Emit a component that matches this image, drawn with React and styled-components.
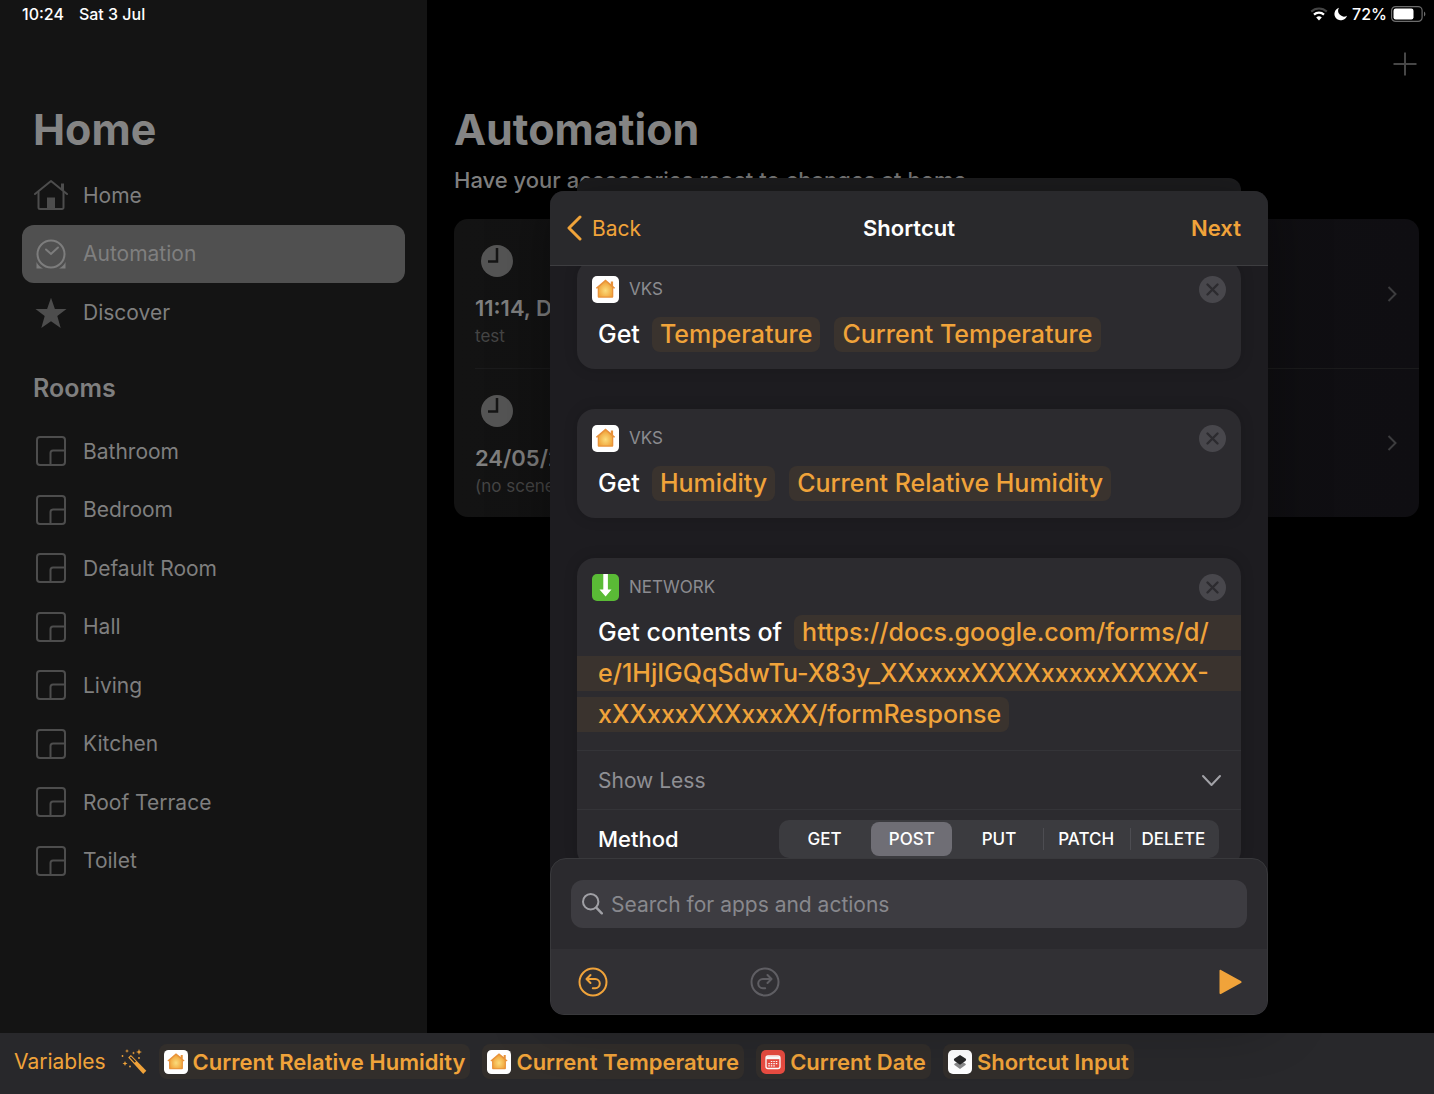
import React, { useState } from 'react';
import styled, { createGlobalStyle } from 'styled-components';

const GlobalStyle = createGlobalStyle`
    * {
        box-sizing: border-box;
    }

    body {
        margin: 0;
        background: #000;
        font-family: Inter, 'Liberation Sans', sans-serif;
    }

    h1, h2, h3, p, ul {
        margin: 0;
        padding: 0;
    }

    button {
        padding: 0;
        border: 0;
        background: none;
        color: inherit;
        font: inherit;
        cursor: pointer;
    }

    svg {
        display: block;
        flex: none;
    }
`;

const Screen = styled.div`
    display: flex;
    flex-direction: column;
    min-height: 100vh;
    overflow: hidden;
`;

const Columns = styled.div`
    display: flex;
    flex: 1;
`;

const StatusBar = styled.div`
    display: flex;
    align-items: center;
    justify-content: ${({ $end }) => ($end ? 'flex-end' : 'flex-start')};
    gap: ${({ $end }) => ($end ? '4px' : '15px')};
    height: 28px;
    padding: ${({ $end }) => ($end ? '0 8px' : '0 22px')};
    color: #fff;
    font-size: 16px;
    font-weight: 500;
`;

/* Sidebar */

const Sidebar = styled.aside`
    flex: 0 0 427px;
    background: #141414;
`;

const SideTitle = styled.h1`
    padding: 73px 33px 9px;
    color: #848484;
    font-size: 43px;
    font-weight: 700;
    line-height: 56px;
`;

const SideHeading = styled.h2`
    padding: 30px 33px 18px;
    color: #7f7f7f;
    font-size: 25px;
    font-weight: 600;
    line-height: 32px;
`;

const NavList = styled.ul`
    display: grid;
    grid-auto-rows: 1fr;
    height: ${({ $height }) => $height}px;
    padding: 0 22px;
    list-style: none;
`;

const NavItem = styled.a`
    display: flex;
    align-items: center;
    gap: 15px;
    height: 100%;
    padding: 0 12px;
    border-radius: 12px;
    background: ${({ $active }) => ($active ? '#505050' : 'transparent')};
    color: #7f7f7f;
    font-size: 21px;
    text-decoration: none;

    svg {
        color: ${({ $active }) => ($active ? '#7d7d7d' : '#4d4d4d')};
    }
`;

/* Automation page */

const Main = styled.main`
    position: relative;
    flex: 1;
    min-width: 0;
`;

const MainTools = styled.div`
    display: flex;
    align-items: flex-start;
    justify-content: flex-end;
    height: 73px;
    padding: 24px 17px 0;
    color: #474747;
`;

const PageTitle = styled.h1`
    padding: 0 27px;
    color: #848484;
    font-size: 43px;
    font-weight: 700;
    line-height: 56px;
`;

const PageText = styled.p`
    padding: 9px 27px 0;
    color: #7f7f7f;
    font-size: 22px;
    font-weight: 500;
    line-height: 28px;
    white-space: nowrap;
`;

const AutomationList = styled.div`
    margin: 25px 15px 0 27px;
    border-radius: 14px;
    background: linear-gradient(90deg, #131313, #0f0e12);
`;

const AutomationRow = styled.article`
    display: flex;
    align-items: center;
    justify-content: space-between;
    height: 149px;
    margin-left: 21px;
    padding-right: 21px;
    color: #3c3c3e;

    & + & {
        border-top: 1px solid #1b1b1c;
    }
`;

const RowInfo = styled.div`
    padding-top: 8px;

    svg {
        margin: 0 0 17px 6px;
        color: #555;
    }
`;

const RowTitle = styled.h2`
    color: #7f7f7f;
    font-size: 22px;
    font-weight: 600;
    line-height: 28px;
`;

const RowText = styled.p`
    color: #454545;
    font-size: 17px;
    line-height: 28px;
`;

/* Shortcut dialog */

const Layer = styled.div`
    position: absolute;
    inset: 0;
    display: flex;
    flex-direction: column;
    padding: 178px 166px 18px 123px;
`;

const BackSheet = styled.div`
    flex: none;
    height: 13px;
    margin: 0 27px;
    border-radius: 12px 12px 0 0;
    background: #1e1e20;
`;

const Dialog = styled.section`
    display: flex;
    flex: 1;
    flex-direction: column;
    min-height: 0;
    border-radius: 14px;
    background: #1d1c20;
    box-shadow: 0 0 60px rgba(0, 0, 0, 0.4);
    overflow: hidden;
`;

const DialogHead = styled.header`
    display: grid;
    flex: none;
    grid-template-columns: 1fr auto 1fr;
    align-items: center;
    height: 75px;
    padding: 0 27px 0 16px;
    border-bottom: 1px solid #3d3d40;
    background: #29292c;
    color: #f0a33a;
    font-size: 22px;
`;

const BackButton = styled.button`
    display: flex;
    align-items: center;
    gap: 9px;
    font-size: 21px;
`;

const DialogTitle = styled.h2`
    padding-left: 11px;
    color: #fff;
    font-size: 22px;
    font-weight: 600;
`;

const NextButton = styled.button`
    justify-self: end;
    font-weight: 600;
`;

const Actions = styled.div`
    display: flex;
    flex: 1;
    flex-direction: column;
    gap: 40px;
    min-height: 0;
    padding: 0 27px;
    overflow: hidden;
`;

const ActionCard = styled.article`
    flex: none;
    border-radius: 18px;
    margin-top: ${({ $scrolled }) => ($scrolled ? '-6px' : '0')};
    background: #2c2b2f;
    box-shadow: 0 0 14px rgba(0, 0, 0, 0.15);
    overflow: hidden;
`;

const CardHead = styled.div`
    display: flex;
    align-items: center;
    gap: 10px;
    padding: 16px 15px 14px;
    color: #8b8b90;
    font-size: 17px;
    line-height: 27px;

    button {
        margin-left: auto;
    }
`;

const Sentence = styled.div`
    display: flex;
    gap: 14px;
    padding: 0 21px 17px;
    color: #fff;
    font-size: 25px;
    font-weight: 500;
    line-height: 35px;
    white-space: nowrap;
`;

const Chip = styled.button`
    padding: 0 8px;
    border-radius: 8px;
    background: #3a332e;
    color: #f0a33a;
`;

const Words = styled.span`
    margin-right: -2px;
`;

const UrlSentence = styled(Sentence)`
    flex-direction: column;
    gap: 6px;
    padding: 0 0 18px;
`;

const UrlStart = styled.div`
    display: flex;
    gap: 12px;
    padding-left: 21px;
`;

const UrlPart = styled.span`
    flex: ${({ $part }) => ($part === 'start' ? '1' : 'none')};
    align-self: ${({ $part }) => ($part === 'end' ? 'flex-start' : 'stretch')};
    padding: ${({ $part }) => ($part === 'start' ? '0 8px' : '0 8px 0 21px')};
    border-radius: ${({ $part }) =>
        ({ start: '8px 0 0 8px', middle: '0', end: '0 8px 8px 0' })[$part]};
    background: #3a332e;
    color: #f0a33a;
`;

const OptionRow = styled.div`
    display: flex;
    align-items: center;
    justify-content: space-between;
    height: 59px;
    padding: 0 22px 0 21px;
    border-top: 1px solid #343438;
    color: #fff;
    font-size: 22px;
    font-weight: 500;
`;

const ShowLess = styled(OptionRow).attrs({ as: 'button' })`
    width: 100%;
    padding-right: 19px;
    color: #8f8f94;
    font-size: 21px;
    font-weight: 400;
`;

const Segments = styled.div`
    display: grid;
    grid-template-columns: repeat(5, 1fr);
    width: 440px;
    height: 38px;
    padding: 2px;
    border-radius: 10px;
    background: #3b3b3f;
`;

const Segment = styled.button`
    position: relative;
    margin: 0 3px;
    border-radius: 8px;
    background: ${({ $on }) => ($on ? '#6f6e75' : 'transparent')};
    font-size: 17px;
    font-weight: 500;

    &::after {
        content: '';
        position: absolute;
        top: 6px;
        right: -4px;
        bottom: 6px;
        width: 1px;
        background: ${({ $line }) => ($line ? '#4d4d52' : 'transparent')};
    }
`;

const DialogFoot = styled.footer`
    flex: none;
    border: 1px solid #39393c;
    border-radius: 16px 16px 14px 14px;
    background: #2b2a2e;
    overflow: hidden;
`;

const SearchArea = styled.div`
    padding: 21px 20px;
`;

const SearchBox = styled.label`
    display: flex;
    align-items: center;
    gap: 8px;
    height: 48px;
    padding: 0 11px;
    border-radius: 12px;
    background: #3d3c41;
    color: #a0a0a5;
`;

const SearchInput = styled.input`
    flex: 1;
    min-width: 0;
    padding: 0;
    border: 0;
    outline: 0;
    background: none;
    color: #fff;
    font: 400 21px Inter, 'Liberation Sans', sans-serif;

    &::placeholder {
        color: #88888d;
        opacity: 1;
    }
`;

const Toolbar = styled.div`
    display: flex;
    align-items: center;
    gap: 142px;
    height: 65px;
    padding: 0 25px 0 27px;
    background: #313034;
    color: #f0a33a;
`;

const RunButton = styled.button`
    margin-left: auto;
`;

/* Variables bar */

const VariablesBar = styled.footer`
    display: flex;
    align-items: center;
    gap: 12px;
    height: 61px;
    padding: 0 14px 4px;
    background: #28282b;
    color: #f0a33a;
    font-size: 22px;
    white-space: nowrap;
`;

const VariablesLabel = styled.button`
    display: flex;
    align-items: center;
    gap: 15px;
    font-size: 21px;
`;

const Variable = styled.button`
    display: flex;
    align-items: center;
    gap: 5px;
    height: 35px;
    padding: 0 5px;
    border-radius: 8px;
    background: #322e2b;
    font-weight: 600;
`;

/* Icons */

const HouseIcon = () => (
    <svg width="34" height="32" viewBox="0 0 34 32" fill="none" stroke="currentColor" strokeWidth="2" strokeLinecap="round" strokeLinejoin="round">
        <path d="M1 15 17 2l16 13" />
        <path d="M4.500 13v15.500a1.500 1.500 0 0 0 1.500 1.500h22a1.500 1.500 0 0 0 1.500-1.500V13" />
        <path d="M28.500 11V4.500" strokeWidth="3" strokeLinecap="butt" />
        <path d="M13 18.500h8V30h-8z" fill="currentColor" stroke="none" />
    </svg>
);

const ClockIcon = () => (
    <svg width="34" height="32" viewBox="0 0 34 32" fill="none" stroke="currentColor" strokeWidth="2">
        <circle cx="17" cy="16" r="13.500" />
        <path d="m12 11.500 5 4.500 7-6.500" strokeLinecap="round" />
        <path d="M2.500 24v6.500H9C6 29 3.800 27 2.500 24zM31.500 24v6.500H25c3-1.500 5.200-3.500 6.500-6.500z" fill="currentColor" stroke="none" />
    </svg>
);

const StarIcon = () => (
    <svg width="34" height="32" viewBox="0 0 34 32" fill="currentColor">
        <path d="M17 .8 20.900 12H32.500l-9.200 7 3.400 12L17 24.200 7.300 31l3.400-12L1.500 12h11.600z" />
    </svg>
);

const RoomIcon = () => (
    <svg width="34" height="32" viewBox="0 0 34 32" fill="none" stroke="currentColor" strokeWidth="2">
        <rect x="3" y="2" width="28" height="28" rx="3" />
        <path d="M16.500 30V18a2.500 2.500 0 0 1 2.500-2.500h12" />
    </svg>
);

const TimeIcon = () => (
    <svg width="32" height="32" viewBox="0 0 32 32">
        <circle cx="16" cy="16" r="16" fill="currentColor" />
        <path d="M16 3v13.500H7" fill="none" stroke="#161616" strokeWidth="2.500" />
    </svg>
);

const WifiIcon = () => (
    <svg width="20" height="14" viewBox="0 0 20 14" fill="none" strokeWidth="2.200">
        <path d="M1.200 4.600a11.400 11.400 0 0 1 15.600 0" stroke="#444" />
        <path d="M4 7.600a7.300 7.300 0 0 1 10 0" stroke="#fff" />
        <path d="M9 13.500 6.200 10.600a4 4 0 0 1 5.600 0z" fill="#fff" />
    </svg>
);

const MoonIcon = () => (
    <svg width="14" height="14" viewBox="0 0 14 14" fill="#fff">
        <path d="M5 .8a5.800 5.800 0 0 0 8 7.900A6.400 6.400 0 1 1 5 .8z" />
    </svg>
);

const BatteryIcon = () => (
    <svg width="35" height="16" viewBox="0 0 35 16">
        <rect x=".6" y=".6" width="30.500" height="14.800" rx="4" fill="none" stroke="#6c6c6c" strokeWidth="1.200" />
        <rect x="2.500" y="2.500" width="20" height="11" rx="2.200" fill="#fff" />
        <path d="M33 5.500c1.800.7 1.800 4.300 0 5z" fill="#6c6c6c" />
    </svg>
);

const PlusIcon = () => (
    <svg width="24" height="24" viewBox="0 0 24 24" stroke="currentColor" strokeWidth="2">
        <path d="M12 .5v23M.5 12h23" />
    </svg>
);

const ChevronRight = () => (
    <svg width="12" height="16" viewBox="0 0 12 16" fill="none" stroke="currentColor" strokeWidth="2">
        <path d="m2.500 1 7 7-7 7" />
    </svg>
);

const ChevronLeft = () => (
    <svg width="17" height="26" viewBox="0 0 17 26" fill="none" stroke="currentColor" strokeWidth="3" strokeLinecap="round" strokeLinejoin="round">
        <path d="M14 2 3 13l11 11" />
    </svg>
);

const ChevronDown = () => (
    <svg width="21" height="13" viewBox="0 0 21 13" fill="none" stroke="#a2a2a7" strokeWidth="2" strokeLinecap="round" strokeLinejoin="round">
        <path d="m2 2 8.500 9L19 2" />
    </svg>
);

const CloseIcon = () => (
    <svg width="27" height="27" viewBox="0 0 27 27">
        <circle cx="13.500" cy="13.500" r="13.500" fill="#48474c" />
        <path d="m8.500 8.500 10 10m0-10-10 10" stroke="#2c2b2f" strokeWidth="2.400" strokeLinecap="round" />
    </svg>
);

const HomeApp = ({ size = 27 }) => (
    <svg width={size} height={size} viewBox="0 0 27 27">
        <defs>
            <radialGradient id="glow" cx="50%" cy="60%" r="60%">
                <stop offset="0" stopColor="#fbdc7c" />
                <stop offset="1" stopColor="#f0a137" />
            </radialGradient>
        </defs>
        <rect width="27" height="27" rx="5" fill="#fff" />
        <path d="M13.500 3.600 18.800 8V5.600h2.300V10l2 1.800-.8 1-1-.6v8.200c0 .8-.5 1.300-1.300 1.300H7c-.8 0-1.300-.5-1.300-1.300v-8.200l-1 .6-.8-1z" fill="#e8923a" />
        <path d="M13.500 5.600 20 11.200v8.300c0 .6-.3.900-.9.900H7.900c-.6 0-.9-.3-.9-.9v-8.300z" fill="url(#glow)" />
    </svg>
);

const DownloadApp = () => (
    <svg width="27" height="27" viewBox="0 0 27 27">
        <rect width="27" height="27" rx="5" fill="#5abb36" />
        <path d="M11.300 0h4.600v15.500h3.600l-5.900 7-6.100-7h3.800z" fill="#fff" />
    </svg>
);

const CalendarApp = () => (
    <svg width="24" height="24" viewBox="0 0 24 24">
        <rect width="24" height="24" rx="5" fill="#e84c41" />
        <rect x="5" y="6" width="14" height="12.500" rx="2" fill="none" stroke="#fff" strokeWidth="1.300" />
        <path d="M5 6.500h14v2.700H5z" fill="#fff" />
        <path d="M9.800 11.500h7M7.300 13.700h9.500M7.300 15.900h7" stroke="#fff" strokeWidth="1.200" strokeDasharray="1.500 1" />
    </svg>
);

const ShortcutsApp = () => (
    <svg width="24" height="24" viewBox="0 0 24 24">
        <rect width="24" height="24" rx="5" fill="#fff" />
        <path d="m12 10.500 5.500 3.300c.5.400.5.900 0 1.300L12 19l-5.500-3.900c-.5-.4-.5-.9 0-1.300z" fill="#8a8a8a" />
        <path d="m12 5 5.500 3.400c.5.300.6.700.6 1.200 0 .6-.2 1-.7 1.300L12 14.800l-5.400-3.900c-.5-.3-.7-.7-.7-1.300 0-.5.100-.9.600-1.200z" fill="#262626" />
    </svg>
);

const WandIcon = () => (
    <svg width="26" height="26" viewBox="0 0 26 26" fill="currentColor">
        <path d="m7.200 8.600 2.700-2.500 15.400 15.600-3.100 3.200z" />
        <path d="m8.800 8.600 1.200-1.100 5 5-1.300 1.200z" fill="#28282b" />
        <path d="m18 0 .8 2.200L21 3l-2.200.8L18 6l-.8-2.200L15 3l2.200-.8zM6 0l.5 1.500L8 2l-1.500.5L6 4l-.5-1.500L4 2l1.500-.5zM4 12l.7 1.800 1.800.7-1.800.7L4 17l-.7-1.800-1.800-.7 1.800-.7zM12.500 2.500l.4 1.100 1.100.4-1.100.4-.4 1.100-.4-1.100L11 4l1.100-.4z" />
        <circle cx="1.500" cy="7" r=".9" />
        <circle cx="18" cy="9" r=".9" />
        <circle cx="9" cy="17.500" r=".9" />
    </svg>
);

const SearchIcon = () => (
    <svg width="21" height="22" viewBox="0 0 21 22" fill="none" stroke="currentColor" strokeWidth="2" strokeLinecap="round">
        <circle cx="8.700" cy="8.700" r="7.700" />
        <path d="m14.300 14.600 5.500 5.700" strokeWidth="2.400" />
    </svg>
);

const UndoIcon = () => (
    <svg width="30" height="30" viewBox="0 0 30 30" fill="none" stroke="currentColor" strokeWidth="2" strokeLinecap="round" strokeLinejoin="round">
        <circle cx="15" cy="15" r="13.500" />
        <path d="M12.500 8 8.500 12l4 4M9 12h8.200a4.600 4.600 0 0 1 0 9.200h-2.400" />
    </svg>
);

const RedoIcon = () => (
    <svg width="30" height="30" viewBox="0 0 30 30" fill="none" stroke="#5f5e63" strokeWidth="2" strokeLinecap="round" strokeLinejoin="round">
        <circle cx="15" cy="15" r="13.500" />
        <path d="m17.500 8 4 4-4 4M21 12h-8.200a4.600 4.600 0 0 0 0 9.200h2.400" />
    </svg>
);

const PlayIcon = () => (
    <svg width="24" height="26" viewBox="0 0 24 26" fill="currentColor">
        <path d="M1.500 1.800c0-1 .6-1.300 1.400-.9l20 11c.9.500.9 1.600 0 2.100l-20 11c-.8.400-1.400 0-1.400-.9z" />
    </svg>
);

const rooms = ['Bathroom', 'Bedroom', 'Default Room', 'Hall', 'Living', 'Kitchen', 'Roof Terrace', 'Toilet'];
const methods = ['GET', 'POST', 'PUT', 'PATCH', 'DELETE'];

const CardTop = ({ icon, label }) => (
    <CardHead>
        {icon}
        {label}
        <button type="button" aria-label="Remove action"><CloseIcon /></button>
    </CardHead>
);

const App = () => {
    const [method, setMethod] = useState('POST');

    return (
        <Screen>
            <GlobalStyle />
            <Columns>
                <Sidebar>
                    <StatusBar>
                        <span>10:24</span>
                        <span>Sat 3 Jul</span>
                    </StatusBar>
                    <SideTitle>Home</SideTitle>
                    <NavList $height={176}>
                        <li><NavItem href="#home"><HouseIcon />Home</NavItem></li>
                        <li><NavItem href="#automation" $active><ClockIcon />Automation</NavItem></li>
                        <li><NavItem href="#discover"><StarIcon />Discover</NavItem></li>
                    </NavList>
                    <SideHeading>Rooms</SideHeading>
                    <NavList $height={468}>
                        {rooms.map((room) => (
                            <li key={room}><NavItem href="#room"><RoomIcon />{room}</NavItem></li>
                        ))}
                    </NavList>
                </Sidebar>

                <Main>
                    <StatusBar $end>
                        <WifiIcon />
                        <MoonIcon />
                        <span>72%</span>
                        <BatteryIcon />
                    </StatusBar>
                    <MainTools>
                        <button type="button" aria-label="Add automation"><PlusIcon /></button>
                    </MainTools>
                    <PageTitle>Automation</PageTitle>
                    <PageText>Have your accessories react to changes at home.</PageText>
                    <AutomationList>
                        <AutomationRow>
                            <RowInfo>
                                <TimeIcon />
                                <RowTitle>11:14, Daily</RowTitle>
                                <RowText>test</RowText>
                            </RowInfo>
                            <ChevronRight />
                        </AutomationRow>
                        <AutomationRow>
                            <RowInfo>
                                <TimeIcon />
                                <RowTitle>24/05/2021</RowTitle>
                                <RowText>(no scenes)</RowText>
                            </RowInfo>
                            <ChevronRight />
                        </AutomationRow>
                    </AutomationList>

                    <Layer>
                        <BackSheet />
                        <Dialog role="dialog" aria-label="Shortcut">
                            <DialogHead>
                                <BackButton type="button"><ChevronLeft />Back</BackButton>
                                <DialogTitle>Shortcut</DialogTitle>
                                <NextButton type="button">Next</NextButton>
                            </DialogHead>
                            <Actions>
                                <ActionCard $scrolled>
                                    <CardTop icon={<HomeApp />} label="VKS" />
                                    <Sentence>
                                        <Words>Get</Words>
                                        <Chip type="button">Temperature</Chip>
                                        <Chip type="button">Current Temperature</Chip>
                                    </Sentence>
                                </ActionCard>
                                <ActionCard>
                                    <CardTop icon={<HomeApp />} label="VKS" />
                                    <Sentence>
                                        <Words>Get</Words>
                                        <Chip type="button">Humidity</Chip>
                                        <Chip type="button">Current Relative Humidity</Chip>
                                    </Sentence>
                                </ActionCard>
                                <ActionCard>
                                    <CardTop icon={<DownloadApp />} label="NETWORK" />
                                    <UrlSentence>
                                        <UrlStart>
                                            <span>Get contents of</span>
                                            <UrlPart $part="start">https://docs.google.com/forms/d/</UrlPart>
                                        </UrlStart>
                                        <UrlPart $part="middle">e/1HjIGQqSdwTu-X83y_XXxxxxXXXXxxxxxXXXXX-</UrlPart>
                                        <UrlPart $part="end">xXXxxxXXXxxxXX/formResponse</UrlPart>
                                    </UrlSentence>
                                    <ShowLess type="button">Show Less<ChevronDown /></ShowLess>
                                    <OptionRow>
                                        Method
                                        <Segments role="group" aria-label="Method">
                                            {methods.map((name, i) => (
                                                <Segment
                                                    key={name}
                                                    type="button"
                                                    aria-pressed={method === name}
                                                    $on={method === name}
                                                    $line={i < 4 && method !== name && method !== methods[i + 1]}
                                                    onClick={() => setMethod(name)}
                                                >
                                                    {name}
                                                </Segment>
                                            ))}
                                        </Segments>
                                    </OptionRow>
                                </ActionCard>
                            </Actions>
                            <DialogFoot>
                                <SearchArea>
                                    <SearchBox>
                                        <SearchIcon />
                                        <SearchInput type="text" aria-label="Search" placeholder="Search for apps and actions" />
                                    </SearchBox>
                                </SearchArea>
                                <Toolbar>
                                    <button type="button" aria-label="Undo"><UndoIcon /></button>
                                    <button type="button" aria-label="Redo"><RedoIcon /></button>
                                    <RunButton type="button" aria-label="Run"><PlayIcon /></RunButton>
                                </Toolbar>
                            </DialogFoot>
                        </Dialog>
                    </Layer>
                </Main>
            </Columns>

            <VariablesBar>
                <VariablesLabel type="button">Variables<WandIcon /></VariablesLabel>
                <Variable type="button"><HomeApp size={24} />Current Relative Humidity</Variable>
                <Variable type="button"><HomeApp size={24} />Current Temperature</Variable>
                <Variable type="button"><CalendarApp />Current Date</Variable>
                <Variable type="button"><ShortcutsApp />Shortcut Input</Variable>
            </VariablesBar>
        </Screen>
    );
};

export default App;
